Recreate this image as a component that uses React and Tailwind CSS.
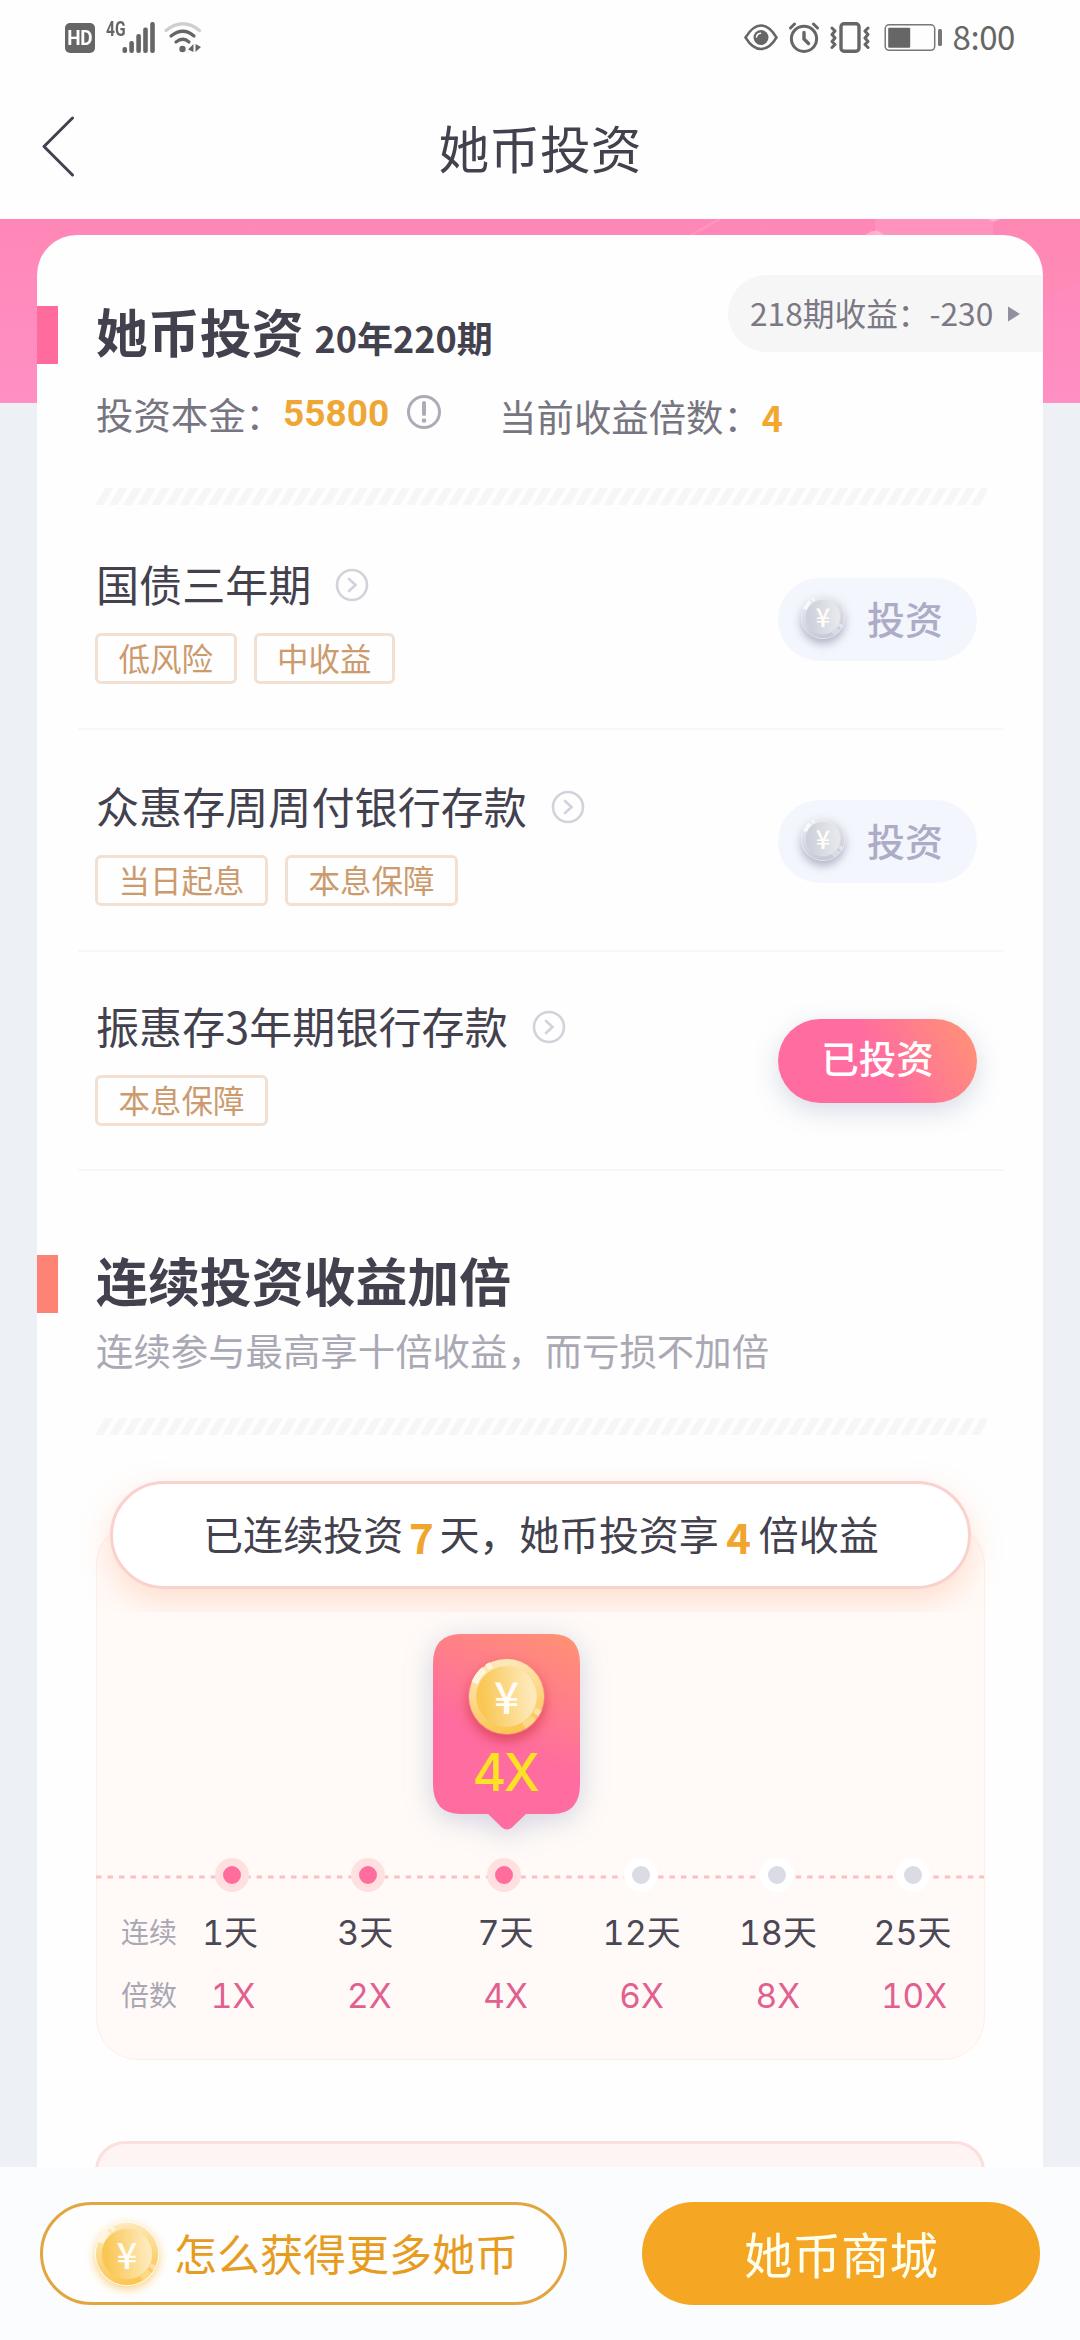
import React from 'react'

const products = [
  { name: '国债三年期', tags: ['低风险', '中收益'], invested: false },
  { name: '众惠存周周付银行存款', tags: ['当日起息', '本息保障'], invested: false },
  { name: '振惠存3年期银行存款', tags: ['本息保障'], invested: true }
]

const steps = [
  { days: '1天', rate: '1X', reached: true, nudge: 'pr-[6px]' },
  { days: '3天', rate: '2X', reached: true, nudge: 'pr-[8px]' },
  { days: '7天', rate: '4X', reached: true, nudge: 'pr-0' },
  { days: '12天', rate: '6X', reached: false, nudge: 'pr-0' },
  { days: '18天', rate: '8X', reached: false, nudge: 'pr-0' },
  { days: '25天', rate: '10X', reached: false, nudge: 'pr-[3px]' }
]

function Coin({ id, silver, className }) {
  const c = silver
    ? { rimA: '#eceef2', rimB: '#c6cad6', inA: '#cdd1dc', inB: '#e6e8ec', shine: '#f8f9fb' }
    : { rimA: '#feeabf', rimB: '#fbc54f', inA: '#f9c754', inB: '#fee9b9', shine: '#fff5dc' }
  return (
    <svg viewBox="0 0 80 80" className={className}>
      <defs>
        <linearGradient id={`${id}-rim`} x1="0.3" y1="0" x2="0.5" y2="1">
          <stop offset="0" stopColor={c.rimA} />
          <stop offset="1" stopColor={c.rimB} />
        </linearGradient>
        <linearGradient id={`${id}-in`} x1="0" y1="0.5" x2="1" y2="0.4">
          <stop offset="0.1" stopColor={c.inA} />
          <stop offset="0.9" stopColor={c.inB} />
        </linearGradient>
      </defs>
      <circle cx="40" cy="40" r="39" fill={`url(#${id}-rim)`} />
      <path d="M7 26 A36 36 0 0 1 17 12" fill="none" stroke={c.shine} strokeWidth="7" />
      <path d="M20 9.5 A36 36 0 0 1 24 7" fill="none" stroke={c.shine} strokeWidth="7" />
      <path d="M73.5 53 A36 36 0 0 1 70.500 58.500" fill="none" stroke={c.shine} strokeWidth="7" opacity="0.5" />
      <path d="M68 62 A36 36 0 0 1 58 70.500" fill="none" stroke={c.shine} strokeWidth="7" opacity="0.35" />
      <circle cx="40" cy="40" r="31.500" fill={`url(#${id}-in)`} />
      <text x="40" y="58.500" textAnchor="middle" fontSize="46" fontWeight="500" fontFamily="'Noto Sans CJK SC', sans-serif" fill="#fffdf5">¥</text>
    </svg>
  )
}

const stripes = Array.from({ length: 63 }, (_, i) => i * 14.13)

function Hatch() {
  return (
    <svg width="892" height="17" className="block" fill="#f6f6f6">
      {stripes.map((x) => (
        <path key={x} d={`M${x} 17 h8.500 l10 -17 h-8.500 Z`} />
      ))}
    </svg>
  )
}

function StatusBar() {
  return (
    <div className="flex h-[75px] items-start justify-between pt-[22px] pr-[65px] pl-[65px] text-[#666]">
      <div className="flex items-start">
        <div className="mt-px flex h-[30px] w-[30px] items-center justify-center rounded-[5px] bg-[#666]">
          <span className="scale-x-[0.9] font-['Roboto',sans-serif] text-[21px] leading-none font-bold tracking-[-0.500px] text-white">HD</span>
        </div>
        <span className="ml-[11px] w-[17px] origin-left scale-x-[0.78] font-['Roboto',sans-serif] text-[20px] leading-[15px] font-bold">4G</span>
        <svg width="34" height="31" viewBox="0 0 34 31" className="-ml-px" fill="#666">
          <rect x="0.500" y="25" width="4.600" height="6" rx="2" />
          <rect x="7.300" y="19" width="4.600" height="12" rx="2" />
          <rect x="14.300" y="12" width="4.600" height="19" rx="2" />
          <rect x="21.200" y="5.500" width="4.600" height="25.500" rx="2" />
          <rect x="28.200" y="0" width="4.600" height="31" rx="2" />
        </svg>
        <svg width="38" height="31" viewBox="0 0 38 31" className="ml-[8px]" fill="none" stroke="#666" strokeWidth="3.200" strokeLinecap="round">
          <path d="M2 8.500 Q19 -5 35.500 8.500" stroke="#cfcfcf" />
          <path d="M7 14 Q19 4.500 30 14" />
          <path d="M12 20 Q19 14.500 25 20" />
          <circle cx="18.500" cy="27" r="3.200" fill="#666" stroke="none" />
          <path d="M29.500 22 V30 L24 27.500 Z M31.500 22 L37 25 L31.500 30 Z" fill="#666" stroke="none" />
        </svg>
      </div>
      <div className="flex items-start">
        <svg width="34" height="31" viewBox="0 0 34 31" fill="none" stroke="#666" strokeWidth="2.500">
          <path d="M1.500 15.500 C7 6.500 12 3.500 17 3.500 S27 6.500 32.500 15.500 C27 24.500 22 27 17 27 S7 24.500 1.500 15.500 Z" />
          <circle cx="17" cy="15.500" r="7.500" fill="#666" stroke="none" />
          <path d="M12.500 15 Q13 11.500 16.500 11.200" stroke="#fff" strokeWidth="1.600" strokeLinecap="round" />
        </svg>
        <svg width="32" height="31" viewBox="0 0 32 31" className="ml-[10px]" fill="none" stroke="#666" strokeWidth="3" strokeLinecap="round">
          <circle cx="16" cy="16.800" r="12.600" />
          <path d="M16 10.500 V17 L20.500 21.500" strokeWidth="3.400" />
          <path d="M2.500 6 L6.500 2 M29.500 6 L25.500 2" />
        </svg>
        <svg width="40" height="31" viewBox="0 0 40 31" className="ml-[10px]" fill="none" stroke="#666" strokeWidth="3.400" strokeLinecap="round" strokeLinejoin="round">
          <rect x="11" y="1.700" width="18" height="27.600" rx="3" />
          <path d="M2 6 L5 9 L2 12.500 L5 16 L2 19.500 L5 22.500 L2 25.500" strokeWidth="3" />
          <path d="M38 6 L35 9 L38 12.500 L35 16 L38 19.500 L35 22.500 L38 25.500" strokeWidth="3" />
        </svg>
        <svg width="59" height="31" viewBox="0 0 59 31" className="ml-[14px]">
          <rect x="1.200" y="2.800" width="49.500" height="25.500" rx="4" fill="none" stroke="#777" strokeWidth="1.500" />
          <rect x="4.200" y="5.800" width="22" height="20" rx="1" fill="#666" />
          <rect x="54" y="7" width="4" height="17" rx="1.500" fill="#777" />
        </svg>
        <span className="ml-[9px] text-[33px] leading-[28px] tracking-[-0.4px]">8:00</span>
      </div>
    </div>
  )
}

function SectionTitle({ barClass, title, extra }) {
  return (
    <div className="flex h-[58px] items-start">
      <span className={`h-[58px] w-[21px] ${barClass}`} />
      <h2 className="ml-[38px] text-[51.900px] leading-[49px] font-bold whitespace-nowrap text-[#43414e]">
        {title}
        {extra && <span className="ml-[11px] text-[36px]">{extra}</span>}
      </h2>
    </div>
  )
}

function InvestButton({ id, invested }) {
  if (invested) {
    return (
      <button className="mt-[24px] flex h-[84px] w-[199px] items-center justify-center rounded-full bg-[linear-gradient(60deg,#ff6c9f_50%,#ff9573)] pb-[7px] text-[37.500px] font-medium text-white shadow-[0_8px_26px_rgba(100,120,160,0.25)]">
        已投资
      </button>
    )
  }
  return (
    <button className="mt-[25px] flex h-[83px] w-[199px] items-center rounded-full bg-[#f3f6fc] pb-[5px] pl-[23px]">
      <Coin id={id} silver className="h-[44px] w-[44px] rounded-full shadow-[0_5px_9px_rgba(120,115,150,0.5)]" />
      <span className="ml-[22px] text-[38px] font-medium text-[#adacc6]">投资</span>
    </button>
  )
}

function ProductRow({ product, index }) {
  return (
    <div className="flex h-[222px] items-start justify-between border-b-2 border-[#f7f7f8] pt-[45px] pr-[26px] pl-[17px] last:h-[219px] last:pt-[43px]">
      <div>
        <div className="flex h-[60px] items-center">
          <h3 className="ml-px text-[43.100px] leading-[60px] whitespace-nowrap text-[#43414e]">{product.name}</h3>
          <svg width="34" height="34" viewBox="0 0 34 34" className="mt-[4px] ml-[24px]" fill="none" stroke="#d3d1da" strokeWidth="2.600">
            <circle cx="17" cy="17" r="15" />
            <path d="M14 11 L20.500 17 L14 23" strokeLinecap="round" />
          </svg>
        </div>
        <div className="mt-[20px] flex gap-[17px]">
          {product.tags.map((tag) => (
            <span key={tag} className="h-[51px] rounded-[6px] border-[3px] border-[#f2e0d3] px-[20.500px] text-[31.500px] leading-[43px] text-[#cb9b6e]">
              {tag}
            </span>
          ))}
        </div>
      </div>
      <InvestButton id={`coin${index}`} invested={product.invested} />
    </div>
  )
}

function StreakBubble() {
  return (
    <div className="relative ml-[336px] flex h-[196px] w-[147px] flex-col items-center pt-[24px]">
      <svg width="147" height="196" viewBox="0 0 147 196" className="absolute inset-0 overflow-visible drop-shadow-[0_6px_14px_rgba(90,110,170,0.28)]">
        <defs>
          <linearGradient id="bubble" x1="0.85" y1="0" x2="0.5" y2="1">
            <stop offset="0" stopColor="#ff9075" />
            <stop offset="0.62" stopColor="#ff6c9f" />
            <stop offset="1" stopColor="#ff6c9f" />
          </linearGradient>
        </defs>
        <path d="M28 0 H119 Q147 0 147 30 V150 Q147 180 119 180 H93 L79 193.500 Q74 197.500 69 193.500 L55 180 H28 Q0 180 0 150 V30 Q0 0 28 0 Z" fill="url(#bubble)" />
      </svg>
      <Coin id="coin-bubble" className="relative h-[77px] w-[77px] rounded-full shadow-[0_6px_12px_rgba(200,50,50,0.6)]" />
      <span className="relative mt-[11px] -ml-[3px] font-['Inter',sans-serif] text-[51.500px] leading-[52px] font-medium tracking-[-2.500px] text-[#fbe224]">4X</span>
    </div>
  )
}

function StreakChart() {
  return (
    <div className="relative mx-[59px] mt-[88px] h-[537px] w-[889px] rounded-[42px] border border-[#feefe5] bg-[#fffaf7] pt-[110px]">
      {/* glow is cut off along the lower edge */}
      <div className="absolute -top-[73px] -left-[21px] h-[161px] w-[930px] overflow-hidden px-[34px] pt-[30px]">
        <div className="flex h-[108px] w-[861px] items-center rounded-full border-[3px] border-[#fbd1ce] bg-white pb-[4px] pl-[90px] text-[40.100px] whitespace-nowrap text-[#43414e] shadow-[0_12px_32px_rgba(255,150,100,0.28)]">
          <span>已连续投资</span>
          <b className="mt-[4px] w-[36px] text-center text-[42px] text-[#f0a52d]">7</b>
          <span className="tracking-[-0.200px]">天，她币投资享</span>
          <b className="mt-[4px] w-[40px] text-center text-[42px] text-[#f0a52d]">4</b>
          <span>倍收益</span>
        </div>
      </div>

      <StreakBubble />

      <div className="relative mt-[28px] flex h-[34px] pl-[67px]">
        <svg width="888" height="4" className="absolute top-[17px] -left-px">
          <path d="M0 2 H888" stroke="#fbc0c2" strokeWidth="3" strokeDasharray="5.500 5.970" />
        </svg>
        {steps.map((s) => (
          <div key={s.days} className="relative flex w-[136.200px] justify-center">
            <span className={`h-[34px] w-[34px] rounded-full border-8 ${s.reached ? 'border-[#ffe0e1] bg-[#ff6d9d]' : 'border-white bg-[#dbdbe6]'}`} />
          </div>
        ))}
      </div>

      <div className="mt-[17px] flex h-[48px] items-center pl-[24px]">
        <span className="mb-[4px] w-[44px] text-[28px] whitespace-nowrap text-[#a9a7b4]">连续</span>
        {steps.map((s) => (
          <span key={s.days} className={`w-[136.200px] text-center font-['Inter','Noto_Sans_CJK_SC',sans-serif] text-[34px] leading-[48px] tabular-nums text-[#4a4854] ${s.nudge}`}>{s.days}</span>
        ))}
      </div>
      <div className="mt-[15px] flex h-[48px] items-center pl-[24px]">
        <span className="mb-[4px] w-[44px] text-[28px] whitespace-nowrap text-[#a9a7b4]">倍数</span>
        {steps.map((s) => (
          <span key={s.rate} className="w-[136.200px] text-center font-['Inter',sans-serif] text-[33.500px] leading-[48px] tabular-nums text-[#e2608f]">{s.rate}</span>
        ))}
      </div>
    </div>
  )
}

export default function App() {
  return (
    <div className="flex h-[2340px] w-[1080px] flex-col overflow-hidden bg-[#edf0f5] font-['Noto_Sans_CJK_SC',sans-serif]">
      <header className="h-[219px] shrink-0 bg-[#fefefe]">
        <StatusBar />
        <div className="relative flex h-[144px] items-center justify-center">
          <svg width="34" height="62" viewBox="0 0 34 62" className="absolute top-[41px] left-[41px]" fill="none" stroke="#43414e" strokeWidth="3" strokeLinecap="round" strokeLinejoin="round">
            <path d="M31.500 2 L3 30.500 L31.500 59" />
          </svg>
          <h1 className="text-[50.800px] leading-[60px] text-[#43414e]">她币投资</h1>
        </div>
      </header>

      <main className="relative min-h-0 flex-1 overflow-hidden px-[37px] pt-[16px]">
        <div className="absolute inset-x-0 top-0 h-[184px] bg-[linear-gradient(180deg,#ff87b7,#ff90c3)]">
          <svg width="1080" height="184" className="block">
            <path d="M691 16 L720 0" stroke="#fff" strokeOpacity="0.12" strokeWidth="2" />
            <path d="M875 0 H993 V16 H875 Z" fill="#fff" fillOpacity="0.1" />
            <path d="M865 16 L872 12 H878 L884 16 Z M988 0 H1000 L994 3 Z" fill="#fff" fillOpacity="0.3" />
            <path d="M1043 80 L1080 61 V0 H1000 Z" fill="#ff8ab0" fillOpacity="0.5" />
          </svg>
        </div>

        <div className="relative h-[2100px] w-[1006px] rounded-t-[40px] bg-[#fefefe] pt-[71px]">
          <SectionTitle barClass="bg-[#ff6b9d]" title="她币投资" extra="20年220期" />
          <div className="absolute top-[40px] right-0 flex h-[77px] w-[315px] items-center rounded-l-full bg-[#f6f6f6] pb-[2px] pl-[22px] text-[31.700px] whitespace-nowrap text-[#7b7985]">
            218期收益：-230
            <svg width="12" height="16" className="mt-[3px] ml-[15px] shrink-0">
              <path d="M0 0.500 L12 8 L0 15.500 Z" fill="#9090a0" />
            </svg>
          </div>

          <div className="mt-[26px] flex h-[48px] items-center pl-[59px] text-[37.400px] leading-[48px] whitespace-nowrap text-[#777581]">
            <span>投资本金：</span>
            <span className="font-['Roboto',sans-serif] text-[37px] font-bold text-[#eea735]">55800</span>
            <svg width="36" height="36" viewBox="0 0 36 36" className="-mt-[4px] ml-[17px]" fill="none" stroke="#adabb8" strokeWidth="3">
              <circle cx="18" cy="18" r="15.500" />
              <path d="M18 9 V20" strokeWidth="4" strokeLinecap="round" />
              <circle cx="18" cy="26.500" r="2.300" fill="#adabb8" stroke="none" />
            </svg>
            <span className="mt-[4px] ml-[57px]">当前收益倍数：</span>
            <b className="mt-[4px] ml-px text-[36px] text-[#f2a72f]">4</b>
          </div>

          <div className="mt-[50px] pl-[58px]"><Hatch /></div>

          <div className="mr-[40px] ml-[41px] pt-[3px]">
            {products.map((p, i) => (
              <ProductRow key={p.name} product={p} index={i} />
            ))}
          </div>

          <div className="mt-[84px]">
            <SectionTitle barClass="bg-[#ff8375]" title="连续投资收益加倍" />
          </div>
          <p className="mt-[13px] pl-[59px] text-[37.400px] leading-[48px] whitespace-nowrap text-[#aaa8b5]">连续参与最高享十倍收益，而亏损不加倍</p>
          <div className="mt-[44px] pl-[58px]"><Hatch /></div>

          <StreakChart />

          <div className="mt-[81px] ml-[58px] h-[200px] w-[890px] rounded-[30px] border-[3px] border-[#fbdfdd] bg-[#fef4f3]" />
        </div>
      </main>

      <footer className="flex h-[173px] shrink-0 items-start justify-between bg-[#fafcfe] px-[40px] pt-[35px]">
        <button className="flex h-[103px] w-[527px] items-center rounded-full border-[3px] border-[#e2a640] bg-[#fefefe] pl-[52px]">
          <Coin id="coin-more" className="h-[64px] w-[64px] rounded-full shadow-[0_3px_10px_rgba(251,190,70,0.7)]" />
          <span className="mb-[3px] ml-[15px] text-[43px] whitespace-nowrap text-[#e69c1f]">怎么获得更多她币</span>
        </button>
        <button className="h-[103px] w-[398px] rounded-full bg-[#f5a623] pb-[2px] text-[48.500px] leading-[100px] text-[#fffff0]">她币商城</button>
      </footer>
    </div>
  )
}
